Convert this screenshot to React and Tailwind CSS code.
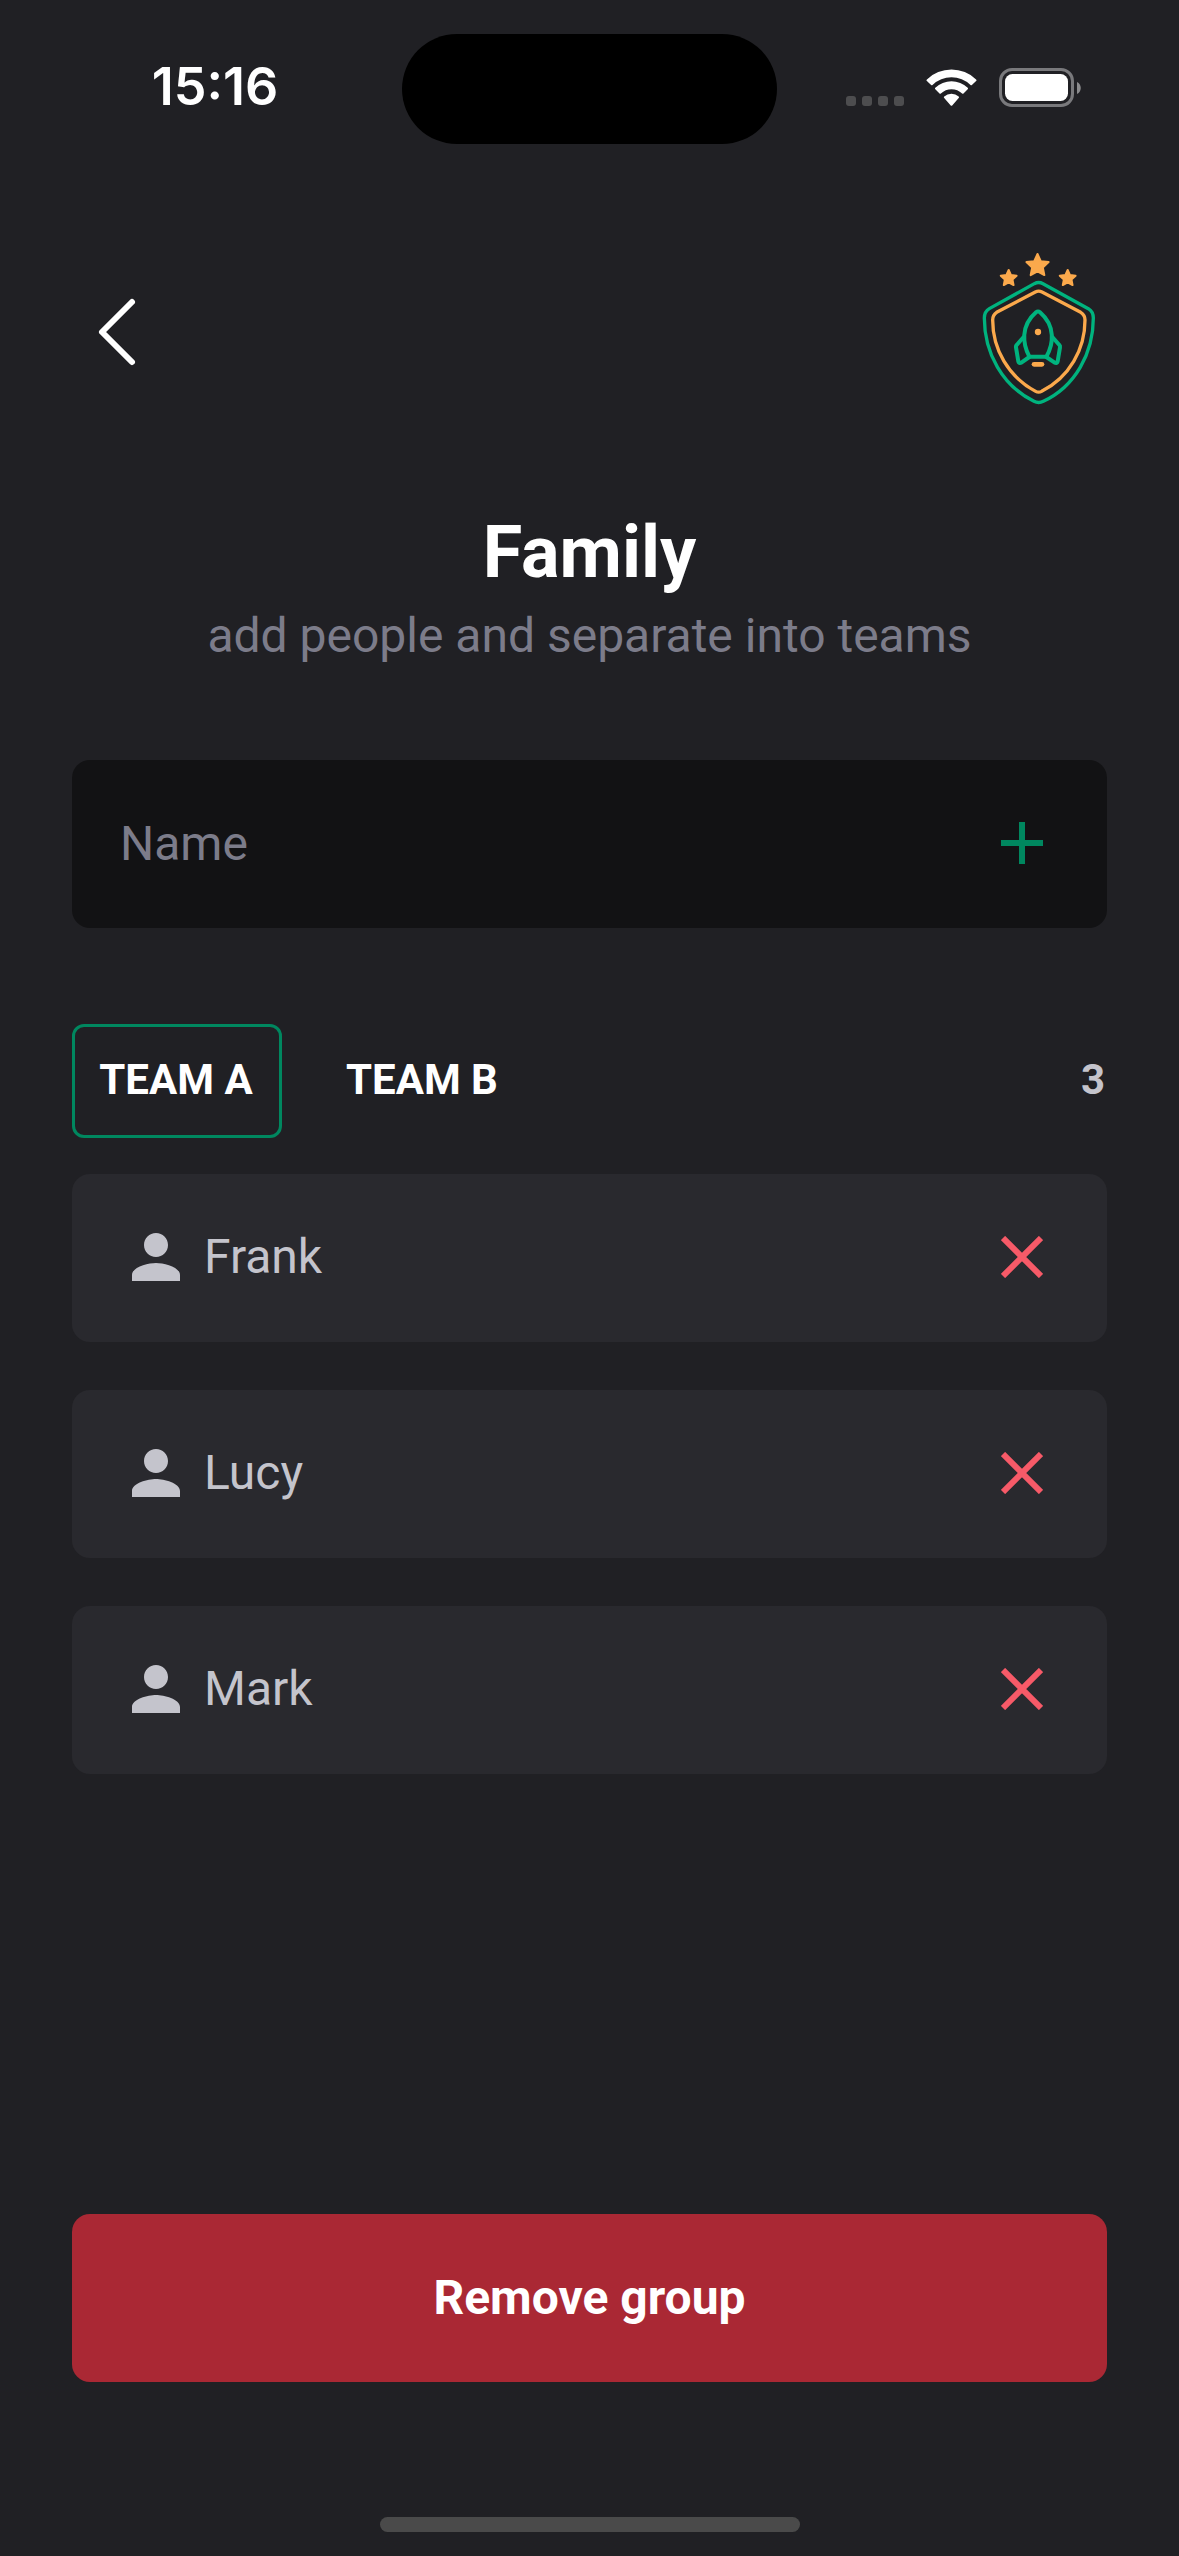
import { useState } from "react";
import { MdPerson } from "react-icons/md";

const GROUP_TEAMS = {
  "Team A": ["Frank", "Lucy", "Mark"],
  "Team B": [],
};

function StatusBar() {
  return (
    <div className="grid h-[177px] grid-cols-[1fr_375px_1fr] items-start pt-[34px]">
      <div className="flex h-[106px] items-center justify-center pl-7 font-['Inter',sans-serif] text-[52px] leading-none font-semibold text-white">
        15:16
      </div>
      <div className="h-[110px] rounded-full bg-black" />
      <div className="flex h-[108px] items-center justify-end pr-[97px]">
        <svg width="236" height="40" viewBox="0 0 236 40" aria-hidden="true">
          <g fill="#4d4d4f">
            <rect x="0" y="28" width="10" height="10" rx="3" />
            <rect x="16" y="28" width="10" height="10" rx="3" />
            <rect x="32" y="28" width="10" height="10" rx="3" />
            <rect x="48" y="28" width="10" height="10" rx="3" />
          </g>
          <g fill="#fff">
            <path d="M80.900 11.400a1 1 0 0 0 0 1.500l4.200 4a1 1 0 0 0 1.400 0 27.400 27.400 0 0 1 38 0 1 1 0 0 0 1.400 0l4.200-4a1 1 0 0 0 0-1.500a35.600 35.600 0 0 0-49.200 0z" />
            <path d="M89.300 19.700a1 1 0 0 0 0 1.500l4.200 4.200a1 1 0 0 0 1.400 0 15.300 15.300 0 0 1 21.200 0 1 1 0 0 0 1.400 0l4.200-4.200a1 1 0 0 0 0-1.500a23.500 23.500 0 0 0-32.400 0z" />
            <path d="M98.200 28.500a1 1 0 0 0 0 1.500l6.500 7.400a1 1 0 0 0 1.500 0l6.500-7.400a1 1 0 0 0 0-1.500a10.800 10.800 0 0 0-14.500 0z" />
          </g>
          <rect x="154.500" y="1.500" width="72" height="36" rx="11.500" fill="none" stroke="#79797c" strokeWidth="3" />
          <rect x="159" y="6" width="63" height="27" rx="7.500" fill="#fff" />
          <path d="M231 14c5 2 5 10 0 12z" fill="#8b8b8d" />
        </svg>
      </div>
    </div>
  );
}

function Star({ x, y, r }) {
  const points = Array.from({ length: 10 }, (_, i) => {
    const radius = i % 2 ? r * 0.48 : r;
    const angle = -Math.PI / 2 + (i * Math.PI) / 5;
    return `${x + radius * Math.cos(angle)},${y + radius * Math.sin(angle)}`;
  }).join(" ");
  return <polygon points={points} fill="#fba94c" stroke="#fba94c" strokeWidth="6" strokeLinejoin="round" />;
}

function Logo() {
  return (
    <svg className="h-[160px] w-[132px]" viewBox="45 30 396 480" role="img" aria-label="Logo">
      <Star x={232.500} y={77} r={35} />
      <Star x={146} y={115} r={25} />
      <Star x={323} y={115} r={25} />
      <g fill="none" strokeLinecap="round" strokeLinejoin="round">
        <path
          stroke="#00b37e"
          strokeWidth="10"
          d="M223 131Q236 124 249 131L385 206Q400 215 400 234C400 340 345 440 250 484Q236 491 222 484C128 438 73 340 73 234Q73 215 88 206Z"
        />
        <path
          stroke="#fba94c"
          strokeWidth="10"
          d="M226 156Q236 151 246 156L362 217Q375 225 375 240C375 328 328 412 245 454Q236 459 227 454C145 410 98 328 98 240Q98 225 110 217Z"
        />
        <g stroke="#00b37e" strokeWidth="12">
          <path d="M208 350C188 312 181 258 228 217Q234 212 240 217C287 258 281 312 259 350Z" />
          <path d="M191 291L170 315Q167 318 168 322L175 364Q177 371 184 368L208 351" />
          <path d="M277 291L298 315Q301 318 300 322L293 364Q291 371 284 368L259 351" />
        </g>
        <path d="M222 373H246" stroke="#fba94c" strokeWidth="14" />
      </g>
      <circle cx="234" cy="276" r="9.500" fill="#fba94c" />
    </svg>
  );
}

function TeamTab({ label, active, onSelect }) {
  return (
    <button
      type="button"
      aria-pressed={active}
      onClick={onSelect}
      className={`h-[114px] w-[210px] rounded-xl border-3 pr-0.5 pb-0.5 text-[42px] font-bold text-white uppercase ${
        active ? "border-[#00875f]" : "border-transparent"
      }`}
    >
      {label}
    </button>
  );
}

function PlayerCard({ name, onRemove }) {
  return (
    <li className="flex h-[168px] items-center rounded-[18px] bg-[#29292e] pb-0.5 pl-12 text-[#c4c4cc]">
      <MdPerson className="mr-3 size-[72px]" aria-hidden="true" />
      <span className="flex-1 text-[48px]">{name}</span>
      <button
        type="button"
        aria-label={`Remove ${name}`}
        onClick={onRemove}
        className="flex h-full w-[170px] items-center justify-center"
      >
        <svg className="size-[42px]" viewBox="0 0 42 42" stroke="#f75a68" strokeWidth="6">
          <path d="M2 2L40 40M40 2L2 40" />
        </svg>
      </button>
    </li>
  );
}

export default function App() {
  const [teams, setTeams] = useState(GROUP_TEAMS);
  const [team, setTeam] = useState("Team A");
  const [name, setName] = useState("");
  const players = teams[team];

  const addPlayer = (event) => {
    event.preventDefault();
    const player = name.trim();
    if (!player || players.includes(player)) return;
    setTeams({ ...teams, [team]: [...players, player] });
    setName("");
  };

  const removePlayer = (player) =>
    setTeams({ ...teams, [team]: players.filter((item) => item !== player) });

  return (
    <div className="flex min-h-screen flex-col bg-[#202024] font-['Roboto',sans-serif] leading-[56px]">
      <StatusBar />

      <main className="flex flex-1 flex-col px-[72px] pt-[73px]">
        <header className="flex items-center justify-between">
          <button type="button" aria-label="Back">
            <svg
              className="size-[96px]"
              viewBox="0 0 96 96"
              fill="none"
              stroke="#fff"
              strokeWidth="6"
              strokeLinecap="round"
              strokeLinejoin="round"
            >
              <path d="M60 20L30 50L60 80" />
            </svg>
          </button>
          <Logo />
        </header>

        <div className="mt-[101px] text-center">
          <h1 className="text-[72px] leading-[84px] font-bold text-white">Family</h1>
          <p className="mt-[13px] text-[48px] text-[#7c7c8a]">add people and separate into teams</p>
        </div>

        <form onSubmit={addPlayer} className="mt-24 flex h-[168px] rounded-[18px] bg-[#121214]">
          <input
            type="text"
            aria-label="Name"
            placeholder="Name"
            value={name}
            onChange={(event) => setName(event.target.value)}
            className="min-w-0 flex-1 rounded-[18px] pl-12 text-[48px] text-white outline-none placeholder:text-[#7c7c8a]"
          />
          <button
            type="submit"
            aria-label="Add person"
            className="flex h-full w-[170px] items-center justify-center pb-0.5"
          >
            <svg className="size-[42px]" viewBox="0 0 42 42" stroke="#00875f" strokeWidth="6">
              <path d="M21 0V42M0 21H42" />
            </svg>
          </button>
        </form>

        <div className="mt-24 flex items-center gap-9">
          {Object.keys(teams).map((label) => (
            <TeamTab key={label} label={label} active={label === team} onSelect={() => setTeam(label)} />
          ))}
          <span className="ml-auto pr-0.5 pb-0.5 text-[42px] font-bold text-[#c4c4cc]">{players.length}</span>
        </div>

        <ul className="mt-9 flex flex-col gap-12">
          {players.map((player) => (
            <PlayerCard key={player} name={player} onRemove={() => removePlayer(player)} />
          ))}
        </ul>

        <button
          type="button"
          className="mt-auto h-[168px] rounded-[18px] bg-[#aa2834] text-[48px] font-bold text-white"
        >
          Remove group
        </button>
      </main>

      <footer className="flex h-[174px] items-end justify-center pb-6">
        <div className="h-[15px] w-[420px] rounded-full bg-[#4a4a4a]" />
      </footer>
    </div>
  );
}
